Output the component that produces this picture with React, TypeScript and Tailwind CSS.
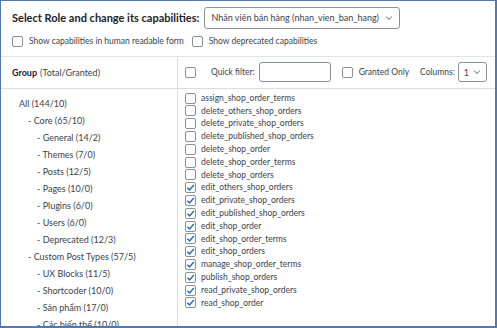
import React from "react";

const groups = [
  { label: "All (144/10)", level: 0 },
  { label: "- Core (65/10)", level: 1 },
  { label: "- General (14/2)", level: 2 },
  { label: "- Themes (7/0)", level: 2 },
  { label: "- Posts (12/5)", level: 2 },
  { label: "- Pages (10/0)", level: 2 },
  { label: "- Plugins (6/0)", level: 2 },
  { label: "- Users (6/0)", level: 2 },
  { label: "- Deprecated (12/3)", level: 2 },
  { label: "- Custom Post Types (57/5)", level: 1 },
  { label: "- UX Blocks (11/5)", level: 2 },
  { label: "- Shortcoder (10/0)", level: 2 },
  { label: "- Sản phẩm (17/0)", level: 2 },
  { label: "- Các biến thể (10/0)", level: 2 },
];

const caps = [
  { name: "assign_shop_order_terms", on: false },
  { name: "delete_others_shop_orders", on: false },
  { name: "delete_private_shop_orders", on: false },
  { name: "delete_published_shop_orders", on: false },
  { name: "delete_shop_order", on: false },
  { name: "delete_shop_order_terms", on: false },
  { name: "delete_shop_orders", on: false },
  { name: "edit_others_shop_orders", on: true },
  { name: "edit_private_shop_orders", on: true },
  { name: "edit_published_shop_orders", on: true },
  { name: "edit_shop_order", on: true },
  { name: "edit_shop_order_terms", on: true },
  { name: "edit_shop_orders", on: true },
  { name: "manage_shop_order_terms", on: true },
  { name: "publish_shop_orders", on: true },
  { name: "read_private_shop_orders", on: true },
  { name: "read_shop_order", on: true },
];

const Box = ({ on = false }: { on?: boolean }) => (
  <span className="relative inline-block w-[11px] h-[11px] shrink-0 rounded-[2px] border border-[#8c8f94] bg-white">
    {on ? (
      <svg
        viewBox="0 0 12 12"
        className="absolute -left-[1px] -top-[1px] w-[11px] h-[11px]"
      >
        <path
          d="M2.5 6.2 L5 8.6 L9.6 3.2"
          fill="none"
          stroke="#2271b1"
          strokeWidth="1.6"
        />
      </svg>
    ) : null}
  </span>
);

const Chevron = () => (
  <svg viewBox="0 0 10 10" className="w-[8px] h-[8px]">
    <path d="M1.5 3.5 L5 6.8 L8.5 3.5" fill="none" stroke="#50575e" strokeWidth="1.2" />
  </svg>
);

export default function App() {
  return (
    <div
      className="w-[497px] h-[328px] overflow-hidden bg-white border-t border-l border-r-2 border-b-2 border-[#5578ad] text-[#3c434a] text-[9px] whitespace-nowrap"
      style={{ fontFamily: 'Lato, "Open Sans", sans-serif' }}
    >
      <div className="flex items-center gap-[5px] pl-[11px] pt-[6px]">
        <span className="font-bold text-[11px] text-[#1d2327]">
          Select Role and change its capabilities:
        </span>
        <div className="flex items-center gap-[6px] h-[22px] px-[6px] border border-[#8c8f94] rounded-[3px] text-[9px]">
          <span>Nhân viên bán hàng (nhan_vien_ban_hang)</span>
          <Chevron />
        </div>
      </div>
      <div className="flex items-center pl-[11px] pt-[6px] pb-[8px] border-b border-[#e3e4e6] text-[8.5px]">
        <label className="flex items-center gap-[6px]">
          <Box />
          <span>Show capabilities in human readable form</span>
        </label>
        <label className="flex items-center gap-[6px] ml-[8px]">
          <Box />
          <span>Show deprecated capabilities</span>
        </label>
      </div>
      <div className="flex">
        <div className="w-[177px] shrink-0 border-r border-[#dcdcde]">
          <div className="h-[32px] flex items-center pl-[11px] border-b border-[#dcdcde]">
            <span className="font-bold text-[#1d2327]">Group</span>
            <span className="ml-[3px]">(Total/Granted)</span>
          </div>
          <div className="flex flex-col pt-[6px]">
            {groups.map((g) => (
              <div
                key={g.label}
                className={
                  "h-[17px] leading-[17px] " +
                  (g.level === 0
                    ? "pl-[18px]"
                    : g.level === 1
                    ? "pl-[27px]"
                    : "pl-[36px]")
                }
              >
                {g.label}
              </div>
            ))}
          </div>
        </div>
        <div className="flex-1">
          <div className="h-[32px] flex items-center pl-[7px] pr-[8px] border-b border-[#dcdcde] text-[8.5px]">
            <Box />
            <span className="ml-[15px]">Quick filter:</span>
            <div className="ml-[4px] w-[72px] h-[20px] border border-[#8c8f94] rounded-[3px]" />
            <label className="flex items-center gap-[6px] ml-[11px]">
              <Box />
              <span>Granted Only</span>
            </label>
            <span className="ml-auto">Columns:</span>
            <div className="ml-[3px] flex items-center gap-[4px] h-[20px] px-[5px] border border-[#8c8f94] rounded-[3px] text-[9px]">
              <span>1</span>
              <Chevron />
            </div>
          </div>
          <div className="flex flex-col pl-[7px] pt-[3px]">
            {caps.map((c) => (
              <label key={c.name} className="flex items-center gap-[5px] h-[12.8px]">
                <Box on={c.on} />
                <span className="text-[8.5px] leading-none">{c.name}</span>
              </label>
            ))}
          </div>
        </div>
      </div>
    </div>
  );
}
